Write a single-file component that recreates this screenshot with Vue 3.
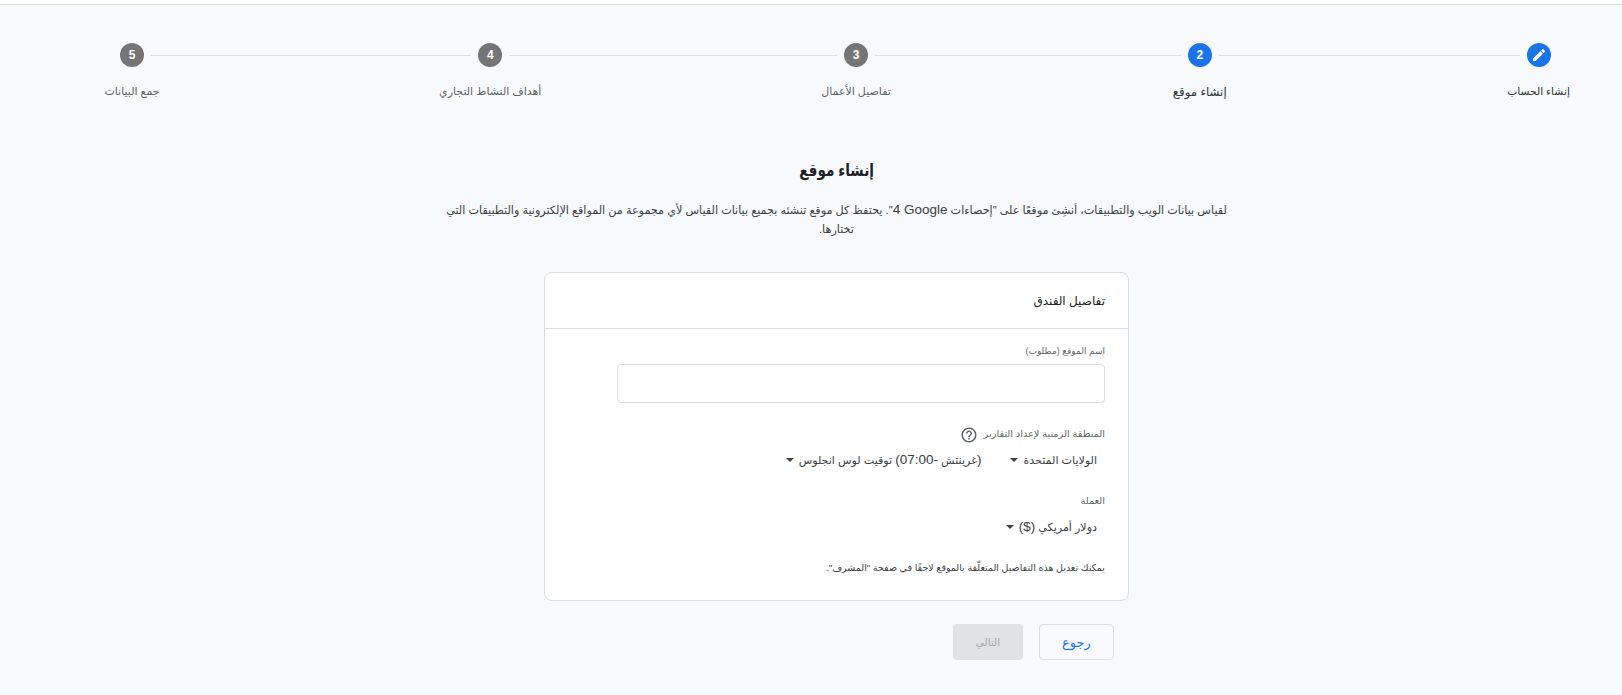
<template>
  <div class="page" dir="rtl">
    <div class="topbar"></div>
    <main class="main">
      <div class="stepper">
        <template v-for="(step, i) in steps" :key="step.label">
          <div class="step" :style="{ width: step.width + 'px' }">
            <div class="step-head">
              <span class="step-line" :class="{ hidden: i === 0 }"></span>
              <span class="step-circle" :class="{ active: i < 2 }">
                <svg v-if="i === 0" viewBox="0 0 24 24" width="16" height="16">
                  <path fill="#fff" d="M3 17.25V21h3.75L17.81 9.94l-3.75-3.75L3 17.25zM20.71 7.04c.39-.39.39-1.02 0-1.41l-2.34-2.34c-.39-.39-1.02-.39-1.41 0l-1.83 1.83 3.75 3.75 1.83-1.83z" />
                </svg>
                <template v-else>{{ i + 1 }}</template>
              </span>
              <span class="step-line" :class="{ hidden: i === steps.length - 1 }"></span>
            </div>
            <div class="step-label" :class="{ done: i === 0, selected: i === 1 }">{{ step.label }}</div>
          </div>
          <span v-if="i < steps.length - 1" class="connector"></span>
        </template>
      </div>

      <h1 class="title"><span>إنشاء موقع</span></h1>
      <p class="subtitle">
        لقياس بيانات الويب والتطبيقات، أنشِئ موقعًا على "إحصاءات <span class="latin">Google&rlm; 4</span>". يحتفظ كل موقع تنشئه بجميع بيانات القياس لأي مجموعة من المواقع الإلكترونية والتطبيقات التي تختارها.
      </p>

      <div class="card">
        <div class="card-header">تفاصيل الفندق</div>
        <div class="card-body">
          <label class="field-label name-label">اسم الموقع (مطلوب)</label>
          <input class="text-input" type="text" />

          <div class="field-label tz-label">
            <span>المنطقة الزمنية لإعداد التقارير</span>
            <svg class="help" viewBox="0 0 24 24" width="18" height="18">
              <path fill="#5f6368" d="M11 18h2v-2h-2v2zm1-16C6.48 2 2 6.48 2 12s4.48 10 10 10 10-4.48 10-10S17.52 2 12 2zm0 18c-4.41 0-8-3.59-8-8s3.59-8 8-8 8 3.59 8 8-3.59 8-8 8zm0-14c-2.21 0-4 1.79-4 4h2c0-1.1.9-2 2-2s2 .9 2 2c0 2-3 1.75-3 5h2c0-2.25 3-2.5 3-5 0-2.21-1.79-4-4-4z" />
            </svg>
          </div>
          <div class="select-row tz-row">
            <span class="select"><span>الولايات المتحدة</span><i class="caret"></i></span>
            <span class="select"><span><span class="latin">(</span>غرينتش <span class="latin">-07:00)</span> توقيت لوس انجلوس</span><i class="caret"></i></span>
          </div>

          <label class="field-label currency-label">العملة</label>
          <div class="select-row">
            <span class="select"><span>دولار أمريكي <span class="latin">($)</span></span><i class="caret"></i></span>
          </div>

          <p class="note">يمكنك تعديل هذه التفاصيل المتعلّقة بالموقع لاحقًا في صفحة "المشرف".</p>
        </div>
      </div>

      <div class="actions">
        <button class="btn btn-back">رجوع</button>
        <button class="btn btn-next" disabled>التالي</button>
      </div>
    </main>
  </div>
</template>

<script setup>
const steps = [
  { label: "إنشاء الحساب", width: 61 },
  { label: "إنشاء موقع", width: 56 },
  { label: "تفاصيل الأعمال", width: 71 },
  { label: "أهداف النشاط التجاري", width: 100 },
  { label: "جمع البيانات", width: 56 },
];
</script>

<style>
html,
body {
  margin: 0;
  background: #f8f9fb;
}
</style>

<style scoped>
.page {
  min-height: 695px;
  background: #f8f9fb;
  font-family: "Liberation Sans", "DejaVu Sans", sans-serif;
  color: #5f6368;
}

.topbar {
  height: 4px;
  background: #fff;
  border-bottom: 1px solid #dadce0;
}

.main {
  padding-left: 51px;
}

.stepper {
  display: flex;
  padding: 38px 53px 0;
}

.step {
  flex: none;
  display: flex;
  flex-direction: column;
  align-items: center;
}

.step-head {
  display: flex;
  align-items: center;
  gap: 7px;
  width: 100%;
  height: 24px;
}

.step-line {
  flex: 1;
  height: 1px;
  background: #dadce0;
}

.step-line.hidden {
  visibility: hidden;
}

.step-circle {
  flex: none;
  width: 24px;
  height: 24px;
  border-radius: 50%;
  background: #757575;
  color: #fff;
  font-size: 12px;
  font-weight: 700;
  display: flex;
  align-items: center;
  justify-content: center;
}

.step-circle.active {
  background: #1a73e8;
}

.connector {
  flex: 1;
  height: 1px;
  margin-top: 12px;
  background: #dadce0;
}

.step-label {
  margin-top: 14px;
  font-size: 11px;
  line-height: 20px;
  white-space: nowrap;
  color: #5f6368;
}

.step-label.done {
  font-size: 10.7px;
  color: #2f3134;
}

.step-label.selected {
  margin-top: 16px;
  font-size: 11.8px;
  line-height: 18px;
  color: #2f3134;
}

.title {
  margin: 56px 0 0;
  font-size: 17px;
  line-height: 28px;
  font-weight: 700;
  color: #202124;
  text-align: center;
}

/* DejaVu's Arabic runs wider than the reference face */
.title span {
  display: inline-block;
  transform: scaleX(0.8);
}

.subtitle {
  width: 790px;
  margin: 16px auto 0;
  font-size: 11.2px;
  line-height: 19px;
  text-align: center;
  color: #3c4043;
}

.latin {
  font-size: 13.5px;
  line-height: 1;
}

.card {
  width: 583px;
  margin: 33px auto 0;
  background: #fff;
  border: 1px solid #dadce0;
  border-radius: 8px;
}

.card-header {
  height: 55px;
  padding: 0 23px;
  display: flex;
  align-items: center;
  border-bottom: 1px solid #dadce0;
  font-size: 12px;
  color: #202124;
}

.card-body {
  padding: 14px 23px 24px;
}

.field-label {
  display: block;
  font-size: 9.8px;
  line-height: 16px;
  color: #5f6368;
}

.name-label {
  font-size: 9px;
}

.text-input {
  display: block;
  box-sizing: border-box;
  width: 488px;
  height: 39px;
  margin-top: 5px;
  border: 1px solid #dadce0;
  border-radius: 4px;
  background: #fff;
}

.tz-label {
  display: flex;
  align-items: center;
  gap: 6px;
  height: 18px;
  margin-top: 22px;
}

.help {
  margin-top: 1px;
}

.currency-label {
  margin-top: 23px;
}

.select-row {
  display: flex;
  gap: 29px;
  height: 20px;
  margin-top: 8px;
  padding-right: 8px;
}

.tz-row {
  margin-top: 7px;
}

.select {
  display: inline-flex;
  align-items: center;
  gap: 5px;
  font-size: 11.1px;
  line-height: 20px;
  color: #3c4043;
}

.caret {
  width: 0;
  height: 0;
  border-left: 4px solid transparent;
  border-right: 4px solid transparent;
  border-top: 4px solid #3c4043;
}

.note {
  margin: 23px 0 0;
  font-size: 9.5px;
  line-height: 16px;
  color: #3c4043;
}

.actions {
  width: 585px;
  box-sizing: border-box;
  margin: 23px auto 0;
  padding-right: 15px;
  display: flex;
  gap: 16px;
}

.btn {
  height: 36px;
  border-radius: 4px;
  font-family: inherit;
}

.btn-back {
  width: 75px;
  background: transparent;
  border: 1px solid #dadce0;
  color: #1a73e8;
  font-size: 13px;
}

.btn-next {
  width: 70px;
  background: #e1e2e4;
  border: none;
  color: #a6a8ab;
  font-size: 10.5px;
}
</style>
